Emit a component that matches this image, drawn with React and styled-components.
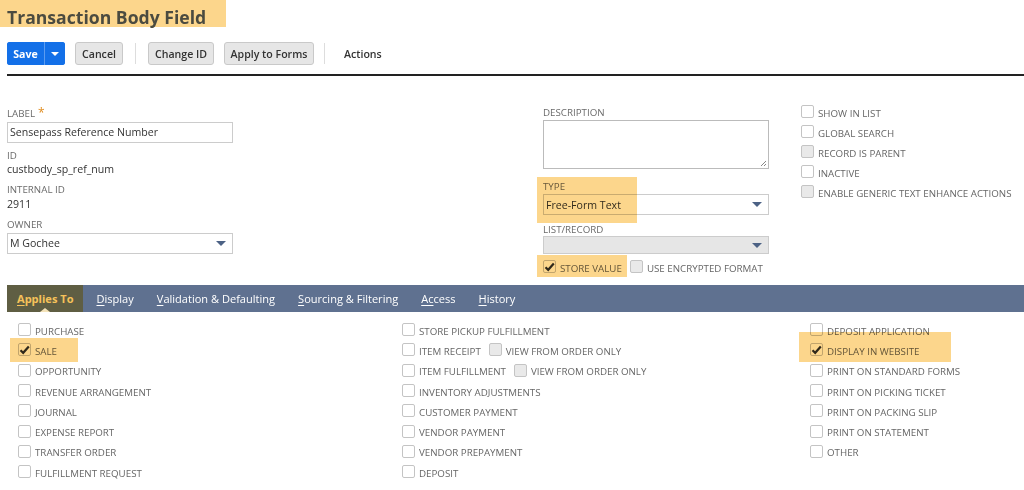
import React from 'react';
import styled, { createGlobalStyle } from 'styled-components';

const GlobalStyle = createGlobalStyle`
  body {
    margin: 0;
    background: #fff;
    font-family: 'Open Sans', 'Noto Sans', sans-serif;
    color: #333;
  }
`;

const Page = styled.div`
  width: 1024px;
  height: 490px;
  overflow: hidden;
  position: relative;
`;

const Mark = styled.span`
  position: absolute;
  background: #fcd27f;
  mix-blend-mode: multiply;
  opacity: 0.9;
  pointer-events: none;
`;

const Header = styled.div`
  position: relative;
  height: 27px;
  padding-left: 7px;
`;

const Title = styled.h1`
  margin: 0;
  font-size: 17.6px;
  font-weight: 700;
  line-height: 30px;
  color: #4b4b40;
  position: relative;
  top: 2px;
`;

const Toolbar = styled.div`
  display: flex;
  align-items: center;
  margin: 15px 0 0 7px;
  height: 23px;
`;

const SaveGroup = styled.div`
  display: flex;
  height: 23px;
  border-radius: 3px;
  overflow: hidden;
  background: #1370e8;
`;

const SaveBtn = styled.button`
  border: 0;
  background: #1370e8;
  color: #fff;
  font: 700 10.6px 'Open Sans', sans-serif;
  padding: 0;
  height: 23px;
  width: ${(p) => p.w}px;
  display: flex;
  align-items: center;
  justify-content: center;
  & + & {
    border-left: 1px solid #5c9cf0;
  }
`;

const Caret = styled.span`
  width: 0;
  height: 0;
  border-left: 4px solid transparent;
  border-right: 4px solid transparent;
  border-top: 4px solid #fff;
`;

const GrayBtn = styled.button`
  height: 23px;
  width: ${(p) => p.w}px;
  border: 1px solid #c9c9c9;
  border-radius: 3px;
  background: #e6e6e6;
  color: #333;
  font: 600 10.6px 'Open Sans', sans-serif;
  padding: 0;
  margin-left: ${(p) => p.ml || 0}px;
`;

const Sep = styled.span`
  width: 1px;
  height: 21px;
  background: #ddd;
  margin: 0 ${(p) => p.r || 12}px 0 ${(p) => p.l || 12}px;
`;

const ActionsLink = styled.span`
  font-size: 10.6px;
  font-weight: 600;
  color: #333;
  margin-left: 7px;
`;

const Rule = styled.div`
  margin: 9px 0 0 7px;
  height: 2px;
  background: #222;
`;

const Form = styled.div`
  display: grid;
  grid-template-columns: 536px 258px 1fr;
  padding: 24px 0 0 7px;
  height: 185px;
`;

const Col = styled.div`
  display: flex;
  flex-direction: column;
  position: relative;
  margin-top: ${(p) => p.mt || 0}px;
`;

const FieldLabel = styled.div`
  font-size: 9.75px;
  color: #6b6b6b;
  text-transform: uppercase;
  line-height: 13px;
  margin-top: ${(p) => p.mt || 0}px;
`;

const Star = styled.span`
  color: #e08c1e;
  font-size: 12px;
  margin-left: 3px;
`;

const Value = styled.div`
  font-size: 10.6px;
  color: #333;
  line-height: 15px;
  margin-top: ${(p) => p.mt || 0}px;
`;

const TextBox = styled.div`
  width: 226px;
  height: ${(p) => p.h || 21}px;
  box-sizing: border-box;
  border: 1px solid #ccc;
  background: ${(p) => (p.disabled ? '#e6e6e6' : '#fff')};
  font-size: 10.6px;
  padding: 0 6px 0 2px;
  color: #333;
  margin-top: ${(p) => p.mt || 0}px;
  display: flex;
  align-items: center;
  justify-content: space-between;
`;

const TextArea = styled.div`
  width: 226px;
  height: 49px;
  box-sizing: border-box;
  border: 1px solid #bbb;
  margin-top: 1px;
  position: relative;
`;

const Grip = styled.svg`
  position: absolute;
  right: 1px;
  bottom: 1px;
`;

const DownArrow = styled.span`
  width: 0;
  height: 0;
  border-left: 5.5px solid transparent;
  border-right: 5.5px solid transparent;
  border-top: 5.5px solid #4c6285;
`;

const CheckRow = styled.div`
  display: flex;
  align-items: center;
  height: ${(p) => p.h || 20.3}px;
  margin-top: ${(p) => p.mt || 0}px;
`;

const Box = styled.span`
  width: 13px;
  height: 13px;
  box-sizing: border-box;
  border: 1px solid #c4c4c4;
  border-radius: 2px;
  background: ${(p) => (p.disabled ? '#e9e9e9' : '#fff')};
  display: inline-flex;
  align-items: center;
  justify-content: center;
  flex: none;
  margin-top: -3px;
`;

const CheckText = styled.span`
  font-size: 9.75px;
  color: #666;
  text-transform: uppercase;
  margin-left: 4px;
  margin-right: 8px;
  white-space: nowrap;
`;

const TabBar = styled.div`
  margin: 0 0 0 7px;
  height: 27px;
  background: #5f7190;
  display: flex;
`;

const Tab = styled.div`
  position: relative;
  padding: 0 ${(p) => (p.active ? 10 : 11.5)}px;
  margin-right: ${(p) => (p.active ? 1.5 : 0)}px;
  display: flex;
  align-items: center;
  font-size: 11.05px;
  font-weight: ${(p) => (p.active ? 700 : 400)};
  color: ${(p) => (p.active ? '#f6c25a' : '#fff')};
  background: ${(p) => (p.active ? '#5f5e43' : 'transparent')};
  u {
    text-decoration-thickness: 1px;
    text-underline-offset: 2px;
  }
  ${(p) =>
    p.active &&
    `&::after {
      content: '';
      position: absolute;
      left: 50%;
      bottom: 0;
      margin-left: -5px;
      border-left: 5px solid transparent;
      border-right: 5px solid transparent;
      border-bottom: 4px solid #f3e2b8;
    }`}
`;

const Lists = styled.div`
  display: grid;
  grid-template-columns: 384px 408px 1fr;
  padding: 9px 0 0 18px;
`;

const Tick = () => (
  <svg width="11" height="10" viewBox="0 0 11 10">
    <path d="M1.5 5.2 L4.2 7.8 L9.8 1.6" fill="none" stroke="#2f2f2f" strokeWidth="2.2" />
  </svg>
);

const Check = ({ label, checked, disabled, extra, h }) => (
  <CheckRow h={h}>
    <Box disabled={disabled}>{checked && <Tick />}</Box>
    <CheckText>{label}</CheckText>
    {extra && (
      <>
        <Box disabled>{null}</Box>
        <CheckText>{extra}</CheckText>
      </>
    )}
  </CheckRow>
);

const col1 = ['Purchase', 'Sale', 'Opportunity', 'Revenue Arrangement', 'Journal', 'Expense Report', 'Transfer Order', 'Fulfillment Request'];
const col2 = [
  ['Store Pickup Fulfillment'],
  ['Item Receipt', 'View from order only'],
  ['Item Fulfillment', 'View from order only'],
  ['Inventory Adjustments'],
  ['Customer Payment'],
  ['Vendor Payment'],
  ['Vendor Prepayment'],
  ['Deposit'],
];
const col3 = ['Deposit Application', 'Display in Website', 'Print on Standard Forms', 'Print on Picking Ticket', 'Print on Packing Slip', 'Print on Statement', 'Other'];

const tabs = [
  ['A', 'pplies To'],
  ['D', 'isplay'],
  ['V', 'alidation & Defaulting'],
  ['S', 'ourcing & Filtering'],
  ['Ac', 'cess'],
  ['H', 'istory'],
];

const App = () => {
  return (
    <Page>
      <GlobalStyle />
      <Header>
        <Mark style={{ left: 0, top: 0, width: 226, height: 27 }} />
        <Title>Transaction Body Field</Title>
      </Header>
      <Toolbar>
        <SaveGroup>
          <SaveBtn w={37}>Save</SaveBtn>
          <SaveBtn w={21}>
            <Caret />
          </SaveBtn>
        </SaveGroup>
        <GrayBtn ml={10} w={48}>Cancel</GrayBtn>
        <Sep l={12} r={12} />
        <GrayBtn w={66}>Change ID</GrayBtn>
        <GrayBtn ml={10} w={90}>Apply to Forms</GrayBtn>
        <Sep l={10} r={12} />
        <ActionsLink>Actions</ActionsLink>
      </Toolbar>
      <Rule />
      <Form>
        <Col>
          <FieldLabel mt={6}>
            Label<Star>*</Star>
          </FieldLabel>
          <TextBox mt={1.5}>Sensepass Reference Number</TextBox>
          <FieldLabel mt={6.5}>ID</FieldLabel>
          <Value>custbody_sp_ref_num</Value>
          <FieldLabel mt={6}>Internal ID</FieldLabel>
          <Value mt={1}>2911</Value>
          <FieldLabel mt={6}>Owner</FieldLabel>
          <TextBox mt={1.5}>
            M Gochee
            <DownArrow />
          </TextBox>
        </Col>
        <Col>
          <FieldLabel mt={6}>Description</FieldLabel>
          <TextArea>
            <Grip width="8" height="8" viewBox="0 0 8 8">
              <path d="M7 2 L2 7 M7 5 L5 7" stroke="#888" strokeWidth="1" />
            </Grip>
          </TextArea>
          <Mark style={{ left: -6, top: 77, width: 100, height: 46 }} />
          <FieldLabel mt={10.5}>Type</FieldLabel>
          <TextBox mt={1.5}>
            Free-Form Text
            <DownArrow />
          </TextBox>
          <FieldLabel mt={7.5}>List/Record</FieldLabel>
          <TextBox disabled mt={0.5} h={18}>
            <span />
            <DownArrow />
          </TextBox>
          <Mark style={{ left: -6, top: 155, width: 90, height: 22 }} />
          <CheckRow h={22} mt={3}>
            <Box>
              <Tick />
            </Box>
            <CheckText>Store Value</CheckText>
            <Box disabled />
            <CheckText>Use Encrypted Format</CheckText>
          </CheckRow>
        </Col>
        <Col mt={3}>
          <Check h={20} label="Show in List" />
          <Check h={20} label="Global Search" />
          <Check h={20} label="Record is Parent" disabled />
          <Check h={20} label="Inactive" />
          <Check h={20} label="Enable Generic Text Enhance Actions" disabled />
        </Col>
      </Form>
      <TabBar>
        {tabs.map(([u, rest], i) => (
          <Tab key={u} active={i === 0}>
            <span>
              <u>{u}</u>
              {rest}
            </span>
          </Tab>
        ))}
      </TabBar>
      <Lists>
        <Col>
          <Mark style={{ left: -8, top: 17, width: 68, height: 24 }} />
          {col1.map((l) => (
            <Check key={l} label={l} checked={l === 'Sale'} />
          ))}
        </Col>
        <Col>
          {col2.map(([l, e]) => (
            <Check key={l} label={l} extra={e} />
          ))}
        </Col>
        <Col>
          <Mark style={{ left: -11, top: 11, width: 152, height: 30 }} />
          {col3.map((l) => (
            <Check key={l} label={l} checked={l === 'Display in Website'} />
          ))}
        </Col>
      </Lists>
    </Page>
  );
};

export default App;
